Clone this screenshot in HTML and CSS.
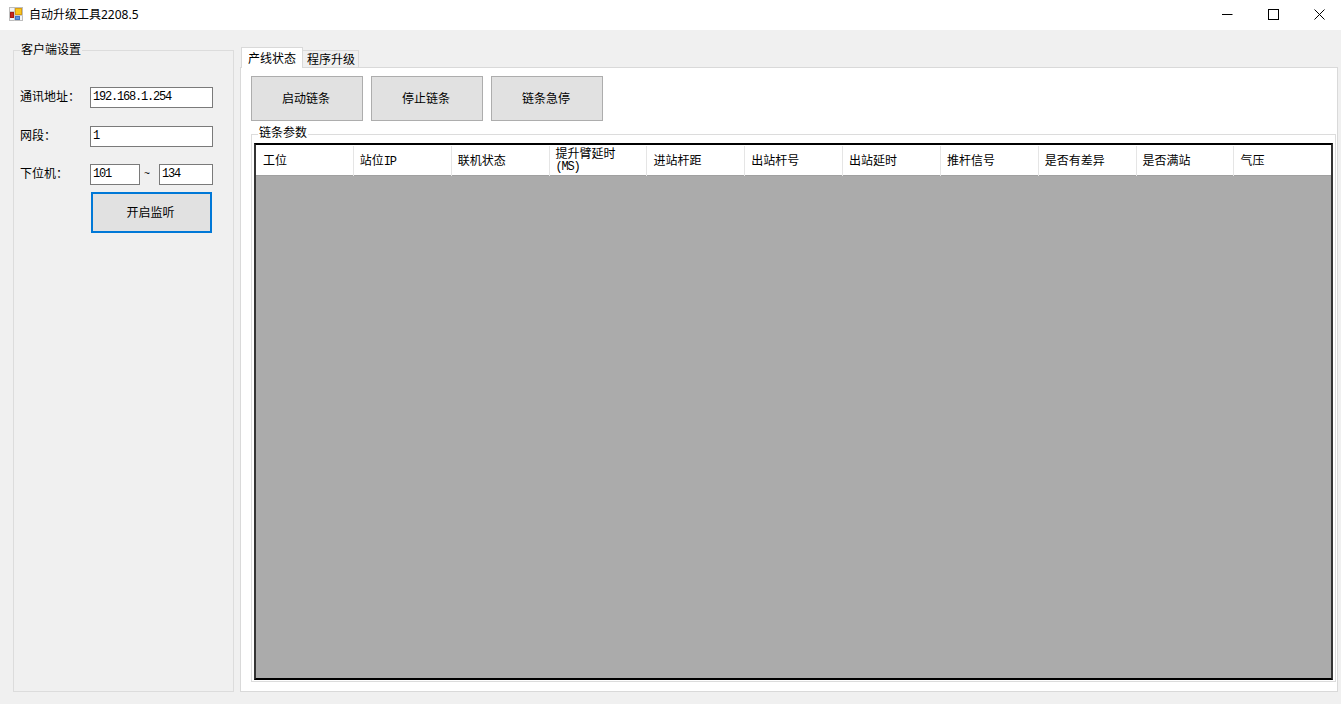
FILE: index.html
```html
<!DOCTYPE html>
<html lang="zh-CN">
<head>
    <meta charset="UTF-8">
    <meta name="viewport" content="width=device-width, initial-scale=1.0">
    <title>自动升级工具2208.5</title>
    <link rel="stylesheet" href="styles.css">
</head>
<body>
    <div class="titlebar">
        <svg class="app-icon" width="15" height="15" viewBox="0 0 15 15">
            <rect x="0.5" y="0.5" width="13" height="13" fill="#f4f4f4" stroke="#bdbdbd"/>
            <path d="M5.5 1V14M1 4.5H6M6 8.5H14" stroke="#c9c9c9" fill="none"/>
            <rect x="1.5" y="5.5" width="3" height="5" fill="#c8261c" stroke="#a51c14"/>
            <rect x="6.5" y="1.5" width="6" height="6" fill="#f7c51e" stroke="#d99e12"/>
            <rect x="6.5" y="9.5" width="4" height="3" fill="#5b93e0" stroke="#3f74c4"/>
        </svg>
        <span class="app-title">自动升级工具2208.5</span>
        <div class="window-controls">
            <svg width="11" height="11" viewBox="0 0 11 11"><path d="M0 5.5H10.5" stroke="#000" fill="none"/></svg>
            <svg width="11" height="11" viewBox="0 0 11 11"><rect x="0.5" y="0.5" width="10" height="10" stroke="#000" fill="none"/></svg>
            <svg width="11" height="11" viewBox="0 0 11 11"><path d="M0.5 0.5L10.5 10.5M10.5 0.5L0.5 10.5" stroke="#000" fill="none"/></svg>
        </div>
    </div>

    <div class="content">
        <fieldset class="group client-settings">
            <legend>客户端设置</legend>
            <div class="form-row">
                <label>通讯地址：</label>
                <input class="field" type="text" value="192.168.1.254">
            </div>
            <div class="form-row">
                <label>网段：</label>
                <input class="field" type="text" value="1">
            </div>
            <div class="form-row range-row">
                <label>下位机：</label>
                <input class="field field-from" type="text" value="101">
                <span class="tilde">~</span>
                <input class="field field-to" type="text" value="134">
            </div>
            <button class="btn btn-listen">开启监听</button>
        </fieldset>

        <div class="tabs">
            <div class="tab-strip">
                <div class="tab active">产线状态</div>
                <div class="tab">程序升级</div>
            </div>
            <div class="tab-page">
                <div class="chain-buttons">
                    <button class="btn btn-chain">启动链条</button>
                    <button class="btn btn-chain">停止链条</button>
                    <button class="btn btn-chain">链条急停</button>
                </div>
                <fieldset class="group chain-params">
                    <legend>链条参数</legend>
                    <div class="grid">
                        <div class="grid-header">
                            <div class="col">工位</div>
                            <div class="col">站位<span class="latin">IP</span></div>
                            <div class="col">联机状态</div>
                            <div class="col col-two-line">提升臂延时<br><span class="latin">(MS)</span></div>
                            <div class="col">进站杆距</div>
                            <div class="col">出站杆号</div>
                            <div class="col">出站延时</div>
                            <div class="col">推杆信号</div>
                            <div class="col">是否有差异</div>
                            <div class="col">是否满站</div>
                            <div class="col">气压</div>
                        </div>
                    </div>
                </fieldset>
            </div>
        </div>
    </div>
</body>
</html>
```

FILE: styles.css
```css
* {
    box-sizing: border-box;
}

html, body {
    height: 100%;
}

body {
    display: flex;
    flex-direction: column;
    margin: 0;
    overflow: hidden;
    background: #f0f0f0;
    color: #000;
    font-family: "Noto Sans CJK SC", "Liberation Sans", sans-serif;
    font-size: 12px;
}

.titlebar {
    display: flex;
    align-items: center;
    flex: none;
    height: 30px;
    padding: 0 16px 1px 9px;
    background: #fff;
}

.app-icon {
    margin-right: 5px;
}

.app-title {
    font-family: "Noto Sans", "Noto Sans CJK SC", sans-serif;
    line-height: 16px;
}

.window-controls {
    display: flex;
    gap: 35px;
    margin-left: auto;
}

.content {
    display: flex;
    flex: 1;
    min-height: 0;
    padding: 13px 3px 12px 13px;
}

.group {
    margin: 0;
    padding: 0;
    min-width: 0;
    border: 1px solid #dcdcdc;
}

.group legend {
    height: 14px;
    padding: 0 1px;
    line-height: 12px;
}

.client-settings {
    flex: none;
    width: 221px;
    padding: 30px 20px 0 6px;
}

.form-row {
    display: flex;
    align-items: center;
    height: 21px;
    margin-bottom: 18px;
}

.form-row label {
    flex: none;
    width: 70px;
    padding-bottom: 4px;
}

.range-row {
    margin-top: -1px;
    margin-bottom: 7px;
}

.field {
    width: 123px;
    height: 21px;
    padding: 0 2px 1px;
    border: 1px solid #7a7a7a;
    border-radius: 0;
    outline: none;
    background: #fff;
    font-family: "Liberation Mono", monospace;
    font-size: 12px;
    letter-spacing: -1.2px;
}

.field-from {
    width: 50px;
}

.field-to {
    width: 54px;
}

.tilde {
    width: 19px;
    padding-left: 4px;
    font-family: "Liberation Mono", monospace;
    font-size: 10px;
}

.btn {
    display: block;
    padding: 0 2px 3px 0;
    border: 1px solid #adadad;
    border-radius: 0;
    background: #e1e1e1;
    color: #000;
    font: inherit;
}

.btn-listen {
    width: 121px;
    height: 41px;
    margin-left: 71px;
    border: 2px solid #0078d7;
}

.tabs {
    display: flex;
    flex: 1;
    flex-direction: column;
    min-width: 0;
    margin-left: 6px;
    padding-top: 4px;
}

.tab-strip {
    display: flex;
    align-items: flex-end;
    height: 21px;
    margin-left: 1px;
    margin-bottom: -1px;
}

.tab {
    position: relative;
    width: 56px;
    height: 18px;
    padding: 0 0 0 4px;
    border: 1px solid #d9d9d9;
    border-left: none;
    background: #f0f0f0;
    line-height: 15px;
}

.tab.active {
    z-index: 1;
    width: 62px;
    height: 21px;
    padding: 0 6px;
    border-left: 1px solid #d9d9d9;
    border-bottom: none;
    background: #fff;
    line-height: 19px;
}

.tab-page {
    display: flex;
    flex: 1;
    flex-direction: column;
    min-height: 0;
    padding: 8px 1px 9px 10px;
    border: 1px solid #d9d9d9;
    background: #fff;
}

.chain-buttons {
    display: flex;
    flex: none;
    gap: 8px;
    margin-bottom: 6px;
}

.btn-chain {
    width: 112px;
    height: 45px;
}

.chain-params {
    display: flex;
    flex: 1;
    min-height: 0;
    padding: 2px 2px 1px;
}

.chain-params legend {
    margin-left: 4px;
    line-height: 10px;
}

.grid {
    flex: 1;
    border: 2px solid #000;
    border-color: #000 #333 #000 #333;
    background: #ababab;
}

.grid-header {
    display: grid;
    grid-template-columns: repeat(10, 97.85px) 1fr;
    height: 31px;
    border-bottom: 1px solid #a0a0a0;
    background: #fff;
}

.col {
    margin: 1px 0 0;
    padding-left: 6px;
    border-right: 1px solid #e5e5e5;
    line-height: 27px;
}

.col:first-child {
    padding-left: 7px;
}

.col:last-child {
    border-right: none;
}

.col-two-line {
    padding-top: 1px;
    line-height: 12px;
}

.latin {
    font-family: "Liberation Mono", monospace;
    letter-spacing: -1.2px;
}
```
